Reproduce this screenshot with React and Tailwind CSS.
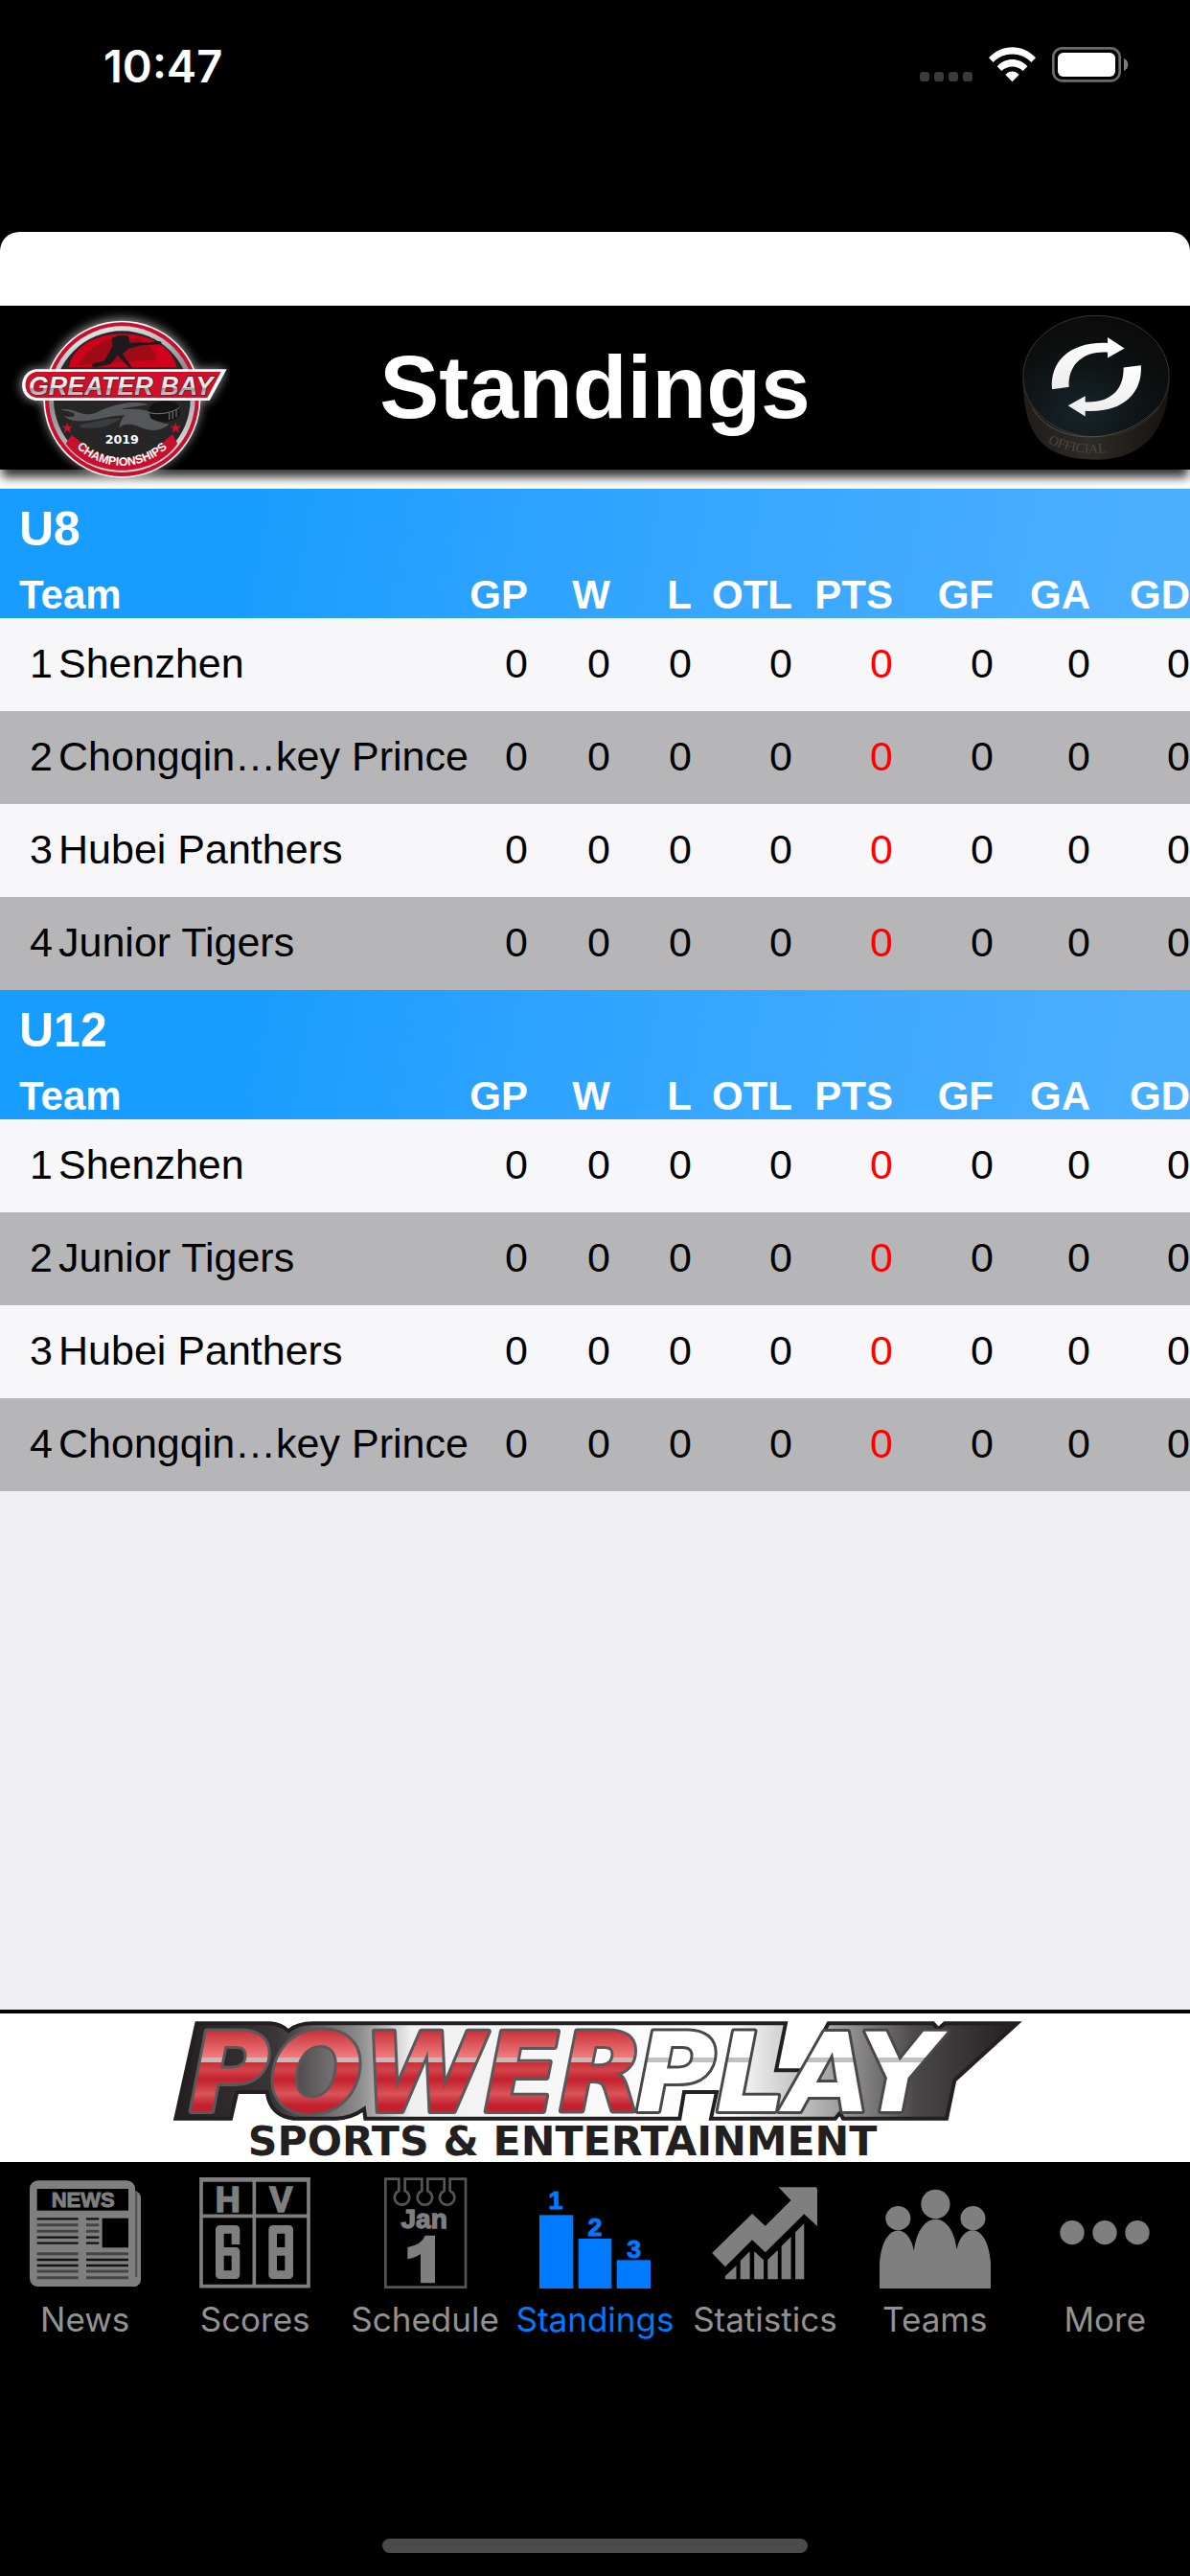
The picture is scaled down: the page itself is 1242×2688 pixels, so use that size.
import { useState } from 'react';

const COLUMNS = ['GP', 'W', 'L', 'OTL', 'PTS', 'GF', 'GA', 'GD'];

const DIVISIONS = [
  { name: 'U8', teams: ['Shenzhen', 'Chongqin…key Prince', 'Hubei Panthers', 'Junior Tigers'] },
  { name: 'U12', teams: ['Shenzhen', 'Junior Tigers', 'Hubei Panthers', 'Chongqin…key Prince'] },
];

const EMPTY_STATS = { GP: 0, W: 0, L: 0, OTL: 0, PTS: 0, GF: 0, GA: 0, GD: 0 };

const STAR = 'M0 -18 L4 -6 L17 -6 L7 2 L11 15 L0 7 L-11 15 L-7 2 L-17 -6 L-4 -6 Z';

function StatusIcons() {
  return (
    <svg viewBox="180 84 654 120" className="h-10 w-[218px]" aria-hidden="true">
      <g fill="#3a3a3a">
        <rect x="180" y="165" width="30" height="30" rx="10" />
        <rect x="225" y="165" width="30" height="30" rx="10" />
        <rect x="270" y="165" width="30" height="30" rx="10" />
        <rect x="315" y="165" width="30" height="30" rx="10" />
      </g>
      <g fill="#fff">
        <path d="M396 121 C437 77 502 77 543 121 L529 135 C496 101 443 101 410 135 Z" />
        <path d="M422 148 C449 119 490 119 517 148 L503 162 C484 144 455 144 436 162 Z" />
        <path d="M448 174 C461 160 478 160 491 174 L469.500 196 Z" />
      </g>
      <rect x="598" y="91" width="208" height="102" rx="28" fill="none" stroke="#6b6b6b" strokeWidth="8" />
      <rect x="612" y="105" width="180" height="75" rx="17" fill="#fff" />
      <path d="M819 123 Q832 128 832 142 Q832 156 819 162 Z" fill="#7d7d7d" />
    </svg>
  );
}

function LeagueLogo() {
  return (
    <svg viewBox="0 57 720 570" className="h-[190px] w-[240px]" role="img" aria-label="Greater Bay Championships 2019">
      <defs>
        <filter id="glow" x="-20%" y="-20%" width="140%" height="140%">
          <feGaussianBlur stdDeviation="16" />
        </filter>
        <linearGradient id="steel" x1="0" y1="0" x2="0" y2="1">
          <stop offset="0" stopColor="#fff" />
          <stop offset="0.55" stopColor="#e4e4e4" />
          <stop offset="0.6" stopColor="#9a9c9e" />
          <stop offset="1" stopColor="#f2f2f2" />
        </linearGradient>
        <linearGradient id="ring" x1="0" y1="0" x2="0.3" y2="1">
          <stop offset="0" stopColor="#fff" />
          <stop offset="0.5" stopColor="#8b8d8f" />
          <stop offset="1" stopColor="#d5d5d5" />
        </linearGradient>
      </defs>
      <g filter="url(#glow)" fill="#fff" opacity="0.6">
        <circle cx="382" cy="345" r="246" />
        <path d="M115 256 H710 L656 354 H115 C50 350 50 262 115 256 Z" />
      </g>
      <circle cx="382" cy="350" r="246" fill="#f4f4f4" />
      <circle cx="382" cy="350" r="241" fill="#c8102e" />
      <circle cx="382" cy="350" r="229" fill="url(#ring)" />
      <circle cx="382" cy="350" r="214" fill="#262627" />
      <path d="M215 250 C245 110 520 110 554 250 Z" fill="#d0021b" />
      <path d="M244 243 Q290 170 355 160 H440 Q480 185 492 226 Z" fill="#9f0a17" />
      <g fill="#1e1a1b">
        <path d="M350 158 Q375 144 402 152 L406 174 L440 172 L447 180 L402 192 L384 208 L413 250 L404 250 L368 212 L346 240 L300 250 L286 246 L292 238 L326 230 L340 206 L352 184 Z" />
        <path d="M440 174 L500 168 L506 172 L503 178 L442 181 Z" />
      </g>
      <path d="M112 256 H710 L656 354 H112 C55 348 55 264 112 256 Z" fill="#fff" />
      <path d="M114 264 H692 L649 345 H114 C68 340 68 270 114 264 Z" fill="#d0102a" />
      <text
        x="378"
        y="335"
        textAnchor="middle"
        fontSize="81"
        fill="url(#steel)"
        stroke="#7c1521"
        strokeWidth="5"
        paintOrder="stroke"
        className="font-['Liberation_Sans',sans-serif] font-bold italic"
      >
        GREATER BAY
      </text>
      <path d="M190 382 C240 376 250 408 300 392 C350 370 400 350 465 366 C430 374 400 372 380 382 C420 378 445 380 470 390 C480 425 520 425 530 428 C500 452 470 450 440 438 C410 426 390 424 372 440 C378 420 380 410 392 400 C350 400 320 412 280 416 C240 422 215 416 200 402 C230 410 240 400 228 392 C215 388 205 386 190 382 Z" fill="#55575a" />
      <path d="M250 430 C300 420 330 408 380 410 C350 428 320 446 250 438 Z" fill="#3b3c3e" />
      <path d="M466 384 C466 350 560 344 562 378 C566 400 564 410 540 416 C510 424 474 418 470 404 Z" fill="#131314" />
      <path d="M468 392 C500 400 540 392 562 376" fill="none" stroke="#77797b" strokeWidth="3" />
      <path d="M530 392 V414 M541 388 V412 M552 382 V406" stroke="#66686a" strokeWidth="4" />
      <path d={STAR} transform="translate(211 440)" fill="#d0102a" />
      <path d={STAR} transform="translate(550 440)" fill="#d0102a" />
      <path d="M206 488 L224 462 L244 476 C310 556 454 556 520 476 L540 460 L556 488 C480 600 284 600 206 488 Z" fill="#c8102e" />
      <text x="382" y="488" textAnchor="middle" fontSize="38" fill="#fff" className="font-['DejaVu_Sans',sans-serif] font-bold">
        2019
      </text>
      <path id="ribbon" d="M213 470 A207 207 0 0 0 551 470" fill="none" />
      <text fontSize="37" fill="#fff" textAnchor="middle" className="font-['Liberation_Sans',sans-serif] font-bold">
        <textPath href="#ribbon" startOffset="50%">
          CHAMPIONSHIPS
        </textPath>
      </text>
    </svg>
  );
}

function RefreshPuck() {
  return (
    <svg viewBox="140 85 468 460" className="h-[153px] w-[156px]" aria-hidden="true">
      <defs>
        <linearGradient id="puckSide" x1="0" y1="0" x2="1" y2="0">
          <stop offset="0" stopColor="#1f1c19" />
          <stop offset="0.45" stopColor="#2f2b27" />
          <stop offset="1" stopColor="#15130f" />
        </linearGradient>
        <radialGradient id="puckTop" cx="0.4" cy="0.8" r="0.8">
          <stop offset="0" stopColor="#17242a" />
          <stop offset="0.6" stopColor="#0d1112" />
          <stop offset="1" stopColor="#0b0b0a" />
        </radialGradient>
        <linearGradient id="arrow" x1="0" y1="0" x2="0" y2="1">
          <stop offset="0" stopColor="#fff" />
          <stop offset="1" stopColor="#ececec" />
        </linearGradient>
      </defs>
      <path d="M143 290 C150 450 190 540 375 541 C540 538 600 430 604 290 Z" fill="url(#puckSide)" />
      <ellipse cx="374" cy="279" rx="229" ry="190" fill="url(#puckTop)" stroke="#39352a" strokeWidth="3" />
      <path d="M175 380 C240 500 460 500 570 375" fill="none" stroke="#6b675b" strokeWidth="3" opacity="0.6" />
      <path id="puckEdge" d="M222 488 Q330 540 470 508" fill="none" />
      <text fontSize="42" fill="#4d4841" className="font-['Liberation_Serif',serif]">
        <textPath href="#puckEdge">OFFICIAL</textPath>
      </text>
      <g fill="url(#arrow)">
        <path d="M236 320 C228 235 290 170 410 175 L410 157 L463 192 L410 222 L410 204 C330 198 284 248 289 313 Z" />
        <path d="M460 252 L515 245 C520 335 455 395 340 388 L340 405 L286 371 L340 341 L340 360 C420 364 462 320 460 252 Z" />
      </g>
    </svg>
  );
}

function SponsorLogo() {
  return (
    <svg viewBox="33 63 2700 465" className="h-[155px] w-[900px] overflow-visible" role="img" aria-label="Powerplay Sports and Entertainment">
      <defs>
        <linearGradient id="chrome" x1="0" y1="0" x2="1" y2="0">
          <stop offset="0" stopColor="#231f20" />
          <stop offset="0.12" stopColor="#3a3637" />
          <stop offset="0.22" stopColor="#8f8e8e" />
          <stop offset="0.28" stopColor="#f0f0f0" />
          <stop offset="0.66" stopColor="#fff" />
          <stop offset="0.78" stopColor="#a5a4a4" />
          <stop offset="0.88" stopColor="#4a4748" />
          <stop offset="1" stopColor="#231f20" />
        </linearGradient>
        <linearGradient id="powerRed" gradientUnits="userSpaceOnUse" x1="0" y1="120" x2="0" y2="370">
          <stop offset="0" stopColor="#c9353b" />
          <stop offset="0.32" stopColor="#f07c7e" />
          <stop offset="0.33" stopColor="#bdbdbd" />
          <stop offset="0.38" stopColor="#bdbdbd" />
          <stop offset="0.39" stopColor="#c8303a" />
          <stop offset="0.48" stopColor="#d2444b" />
          <stop offset="0.6" stopColor="#c3202e" />
          <stop offset="0.78" stopColor="#d85458" />
          <stop offset="0.92" stopColor="#c3202e" />
        </linearGradient>
        <linearGradient id="playWhite" gradientUnits="userSpaceOnUse" x1="0" y1="120" x2="0" y2="370">
          <stop offset="0" stopColor="#fff" />
          <stop offset="0.32" stopColor="#fff" />
          <stop offset="0.33" stopColor="#c0c0c0" />
          <stop offset="0.38" stopColor="#c0c0c0" />
          <stop offset="0.39" stopColor="#fff" />
        </linearGradient>
      </defs>
      <path
        d="M136 94 H365 Q400 96 423 118 Q450 94 500 94 H1980 L1950 241 H2034 L2114 94 H2442 L2458 112 L2478 94 H2705 L2509 272 L2484 392 H2160 L2150 374 L2135 392 H1746 L1764 309 H1662 L1648 392 H664 L660 362 Q620 392 570 392 H440 Q366 384 356 309 H262 L243 392 H70 Z"
        fill="url(#chrome)"
        stroke="#231f20"
        strokeWidth="12"
      />
      <g fontSize="344" paintOrder="stroke" strokeWidth="18" strokeLinejoin="round" className="font-['DejaVu_Sans',sans-serif] font-bold italic">
        <text x="112" y="368" fill="url(#powerRed)" stroke="#5b5859">
          POWER
        </text>
        <text x="1510" y="368" fill="url(#playWhite)" stroke="#4a4748">
          PLAY
        </text>
      </g>
      <text x="1281" y="508" textAnchor="middle" fontSize="128" fill="#231f20" className="font-['DejaVu_Sans',sans-serif] font-bold">
        SPORTS &amp; ENTERTAINMENT
      </text>
    </svg>
  );
}

function NewsIcon() {
  return (
    <svg viewBox="93 66 348 348" className="size-[116px]" aria-hidden="true">
      <rect x="380" y="108" width="61" height="300" rx="22" fill="#7f7f7f" />
      <path d="M425 110 V378" stroke="#555" strokeWidth="10" />
      <rect x="93" y="76" width="330" height="332" rx="26" fill="#7f7f7f" />
      <rect x="380" y="380" width="55" height="28" rx="14" fill="#7f7f7f" />
      <rect x="116" y="102" width="286" height="68" fill="#000" />
      <text x="260" y="158" textAnchor="middle" fontSize="66" fill="#7f7f7f" stroke="#7f7f7f" strokeWidth="3" className="font-['Liberation_Sans',sans-serif] font-bold">
        NEWS
      </text>
      <path d="M116 196 H245 M116 254 H245 M116 272 H245 M270 196 H310 M270 254 H310 M270 272 H310 M116 324 H245 M116 342 H245 M270 324 H402 M270 342 H402" stroke="#111" strokeWidth="7" />
      <path d="M116 215 H245 M116 235 H245 M270 215 H310 M270 235 H310 M116 305 H245 M116 360 H245 M116 380 H245 M270 305 H402 M270 360 H402 M270 380 H402" stroke="#444" strokeWidth="9" />
      <rect x="320" y="194" width="82" height="92" fill="#000" />
    </svg>
  );
}

function ScoresIcon() {
  return (
    <svg viewBox="618 66 348 348" className="size-[116px]" aria-hidden="true">
      <path d="M624 75 H960 V407 H624 Z M790 75 V407 M624 187 H960" fill="none" stroke="#7f7f7f" strokeWidth="11" />
      <path d="M618 69 H966" stroke="#7f7f7f" strokeWidth="6" />
      <g fill="#7f7f7f" stroke="#7f7f7f" strokeWidth="5" textAnchor="middle" className="font-['Liberation_Sans',sans-serif] font-bold">
        <text x="707" y="174" fontSize="108">H</text>
        <text x="874" y="174" fontSize="108">V</text>
      </g>
      <g fill="none" stroke="#7f7f7f" strokeWidth="26" strokeLinejoin="round">
        <path d="M732 276 V229 H682 V371 H732 V298 H682" />
        <path d="M850 229 H899 V371 H848 V229 Z M850 298 H899" />
      </g>
    </svg>
  );
}

function ScheduleIcon() {
  return (
    <svg viewBox="127 66 348 348" className="size-[116px]" aria-hidden="true">
      <path
        d="M176 410 V71 H218 V108 A23 23 0 1 0 237 108 V71 H290 V108 A23 23 0 1 0 308 108 V71 H360 V108 A23 23 0 1 0 378 108 V71 H427 V410 Z"
        fill="none"
        stroke="#555"
        strokeWidth="8"
      />
      <text x="297" y="226" fontSize="84" fill="#7f7f7f" stroke="#7f7f7f" strokeWidth="4" textAnchor="middle" className="font-['Liberation_Sans',sans-serif] font-bold">
        Jan
      </text>
      <path d="M245 285 Q290 276 300 248 H331 V397 H286 V306 Q270 318 245 322 Z" fill="#7f7f7f" />
    </svg>
  );
}

function StandingsIcon() {
  return (
    <svg viewBox="665 66 348 348" className="size-[116px]" aria-hidden="true">
      <g fill="#007aff">
        <rect x="665" y="184" width="106" height="230" />
        <rect x="787" y="258" width="104" height="156" />
        <rect x="907" y="325" width="106" height="89" />
        <g fontSize="80" textAnchor="middle" stroke="#007aff" strokeWidth="3" className="font-['Liberation_Sans',sans-serif] font-bold">
          <text x="716" y="165">1</text>
          <text x="839" y="250">2</text>
          <text x="961" y="319">3</text>
        </g>
      </g>
    </svg>
  );
}

function StatisticsIcon() {
  return (
    <svg viewBox="150 66 348 348" className="size-[116px]" aria-hidden="true">
      <g transform="scale(1.056 1)" fill="#7f7f7f">
        <path d="M151 303 L270 180 L309 218 L385 138 L348 97 H458 Q463 97 463 103 V219 L424 181 L309 301 L270 262 L190 346 Z" />
        <path d="M190 385 V375 L223 342 V385 Z M235 385 V327 L263 298 V385 Z M276 385 V298 L304 325 V385 Z M316 385 V324 L346 294 V385 Z M357 385 V281 L385 252 V385 Z M398 385 V238 L424 211 V385 Z" />
      </g>
    </svg>
  );
}

function TeamsIcon() {
  return (
    <svg viewBox="677 66 348 348" className="size-[116px]" aria-hidden="true">
      <g transform="scale(1.056 1)" fill="#7f7f7f">
        <ellipse cx="807" cy="150" rx="43" ry="46" />
        <ellipse cx="696" cy="194" rx="37" ry="38" />
        <ellipse cx="918" cy="194" rx="37" ry="38" />
        <path d="M641 414 V340 C648 205 728 205 743 296 C758 165 856 165 870 292 C886 205 964 205 971 340 V414 Z" />
      </g>
    </svg>
  );
}

function MoreIcon() {
  return (
    <svg viewBox="1212 66 348 348" className="size-[116px]" aria-hidden="true">
      <g fill="#7f7f7f">
        <circle cx="1284" cy="239" r="38" />
        <circle cx="1386" cy="239" r="38" />
        <circle cx="1488" cy="239" r="38" />
      </g>
    </svg>
  );
}

const TABS = [
  { label: 'News', Icon: NewsIcon },
  { label: 'Scores', Icon: ScoresIcon },
  { label: 'Schedule', Icon: ScheduleIcon },
  { label: 'Standings', Icon: StandingsIcon },
  { label: 'Statistics', Icon: StatisticsIcon },
  { label: 'Teams', Icon: TeamsIcon },
  { label: 'More', Icon: MoreIcon },
];

function DivisionTable({ division }) {
  return (
    <table className="w-full table-fixed border-collapse text-[42px] leading-[48px]">
      <colgroup>
        <col className="w-[55px]" />
        <col />
        <col className="w-[65px]" />
        <col className="w-[86px]" />
        <col className="w-[85px]" />
        <col className="w-[105px]" />
        <col className="w-[105px]" />
        <col className="w-[105px]" />
        <col className="w-[101px]" />
        <col className="w-[104px]" />
      </colgroup>
      <thead className="bg-linear-100 from-[#169dff] from-20% to-[#4db0ff] text-white">
        <tr className="h-[87px]">
          <th colSpan={10} scope="colgroup" className="pb-1 pl-5 text-left text-[50px] font-bold">
            {division.name}
          </th>
        </tr>
        <tr className="h-12">
          <th colSpan={2} scope="col" className="p-0 pl-5 text-left font-bold">
            Team
          </th>
          {COLUMNS.map((column) => (
            <th key={column} scope="col" className="p-0 text-right font-bold">
              <span className="float-right whitespace-nowrap">{column}</span>
            </th>
          ))}
        </tr>
      </thead>
      <tbody className="text-[43px]">
        {division.teams.map((team, index) => (
          <tr key={team} className="h-[97px] bg-[#f7f7fa] text-black even:bg-[#b6b6b8]">
            <td className="pb-1 text-right">{index + 1}</td>
            <td className="pb-1 pl-1.5 whitespace-nowrap">{team}</td>
            {COLUMNS.map((column) => (
              <td key={column} className={column === 'PTS' ? 'pb-1 text-right text-[#f00]' : 'pb-1 text-right'}>
                {EMPTY_STATS[column]}
              </td>
            ))}
          </tr>
        ))}
      </tbody>
    </table>
  );
}

export default function App() {
  const [activeTab, setActiveTab] = useState('Standings');

  return (
    <div className="flex min-h-screen flex-col overflow-hidden bg-black font-['Liberation_Sans',Arial,sans-serif]">
      <div className="flex h-[242px] items-start">
        <div className="flex h-[136px] w-full items-center justify-between pr-16 pl-[108px]">
          <span className="font-['Inter',sans-serif] text-[47px] leading-none font-semibold text-white">10:47</span>
          <StatusIcons />
        </div>
      </div>

      <div className="rounded-t-[20px] bg-white pt-[77px] pb-5">
        <header className="grid h-[171px] grid-cols-[1fr_auto_1fr] grid-rows-[171px] bg-black shadow-[0_10px_10px_-2px_rgba(0,0,0,0.8)]">
          <LeagueLogo />
          <h1 className="self-center text-[93px] leading-none font-bold text-white">Standings</h1>
          <button type="button" aria-label="Refresh" className="mt-[9px] mr-5 self-start justify-self-end">
            <RefreshPuck />
          </button>
        </header>
      </div>

      <main className="flex-1 bg-[#efeff4]">
        {DIVISIONS.map((division) => (
          <DivisionTable key={division.name} division={division} />
        ))}
      </main>

      <div className="flex justify-center border-t-4 border-black bg-white">
        <SponsorLogo />
      </div>

      <nav className="flex pt-4">
        {TABS.map(({ label, Icon }) => (
          <button
            key={label}
            type="button"
            onClick={() => setActiveTab(label)}
            className={`flex min-w-0 flex-1 flex-col items-center gap-3 font-['Inter',sans-serif] text-[35px] leading-10 ${
              label === activeTab ? 'text-[#007aff]' : 'text-[#929292]'
            }`}
          >
            <Icon />
            {label}
          </button>
        ))}
      </nav>

      <div className="flex h-[248px] items-end justify-center pb-6">
        <div className="h-[15px] w-[444px] rounded-full bg-[#4b4b4b]" />
      </div>
    </div>
  );
}
